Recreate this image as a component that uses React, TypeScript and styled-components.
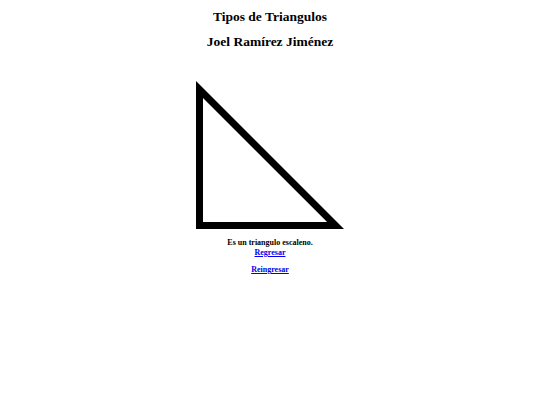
import styled, { createGlobalStyle } from 'styled-components';

const Global = createGlobalStyle`
  html, body {
    margin: 0;
    padding: 0;
    background: #ffffff;
  }
  body {
    font-family: "Liberation Serif", "Times New Roman", serif;
    color: #000000;
  }
`;

const Page = styled.main`
  display: flex;
  flex-direction: column;
  align-items: center;
  padding-top: 8px;
  text-align: center;
`;

const Title = styled.h1`
  margin: 0;
  font-size: 13.5px;
  line-height: 18px;
  font-weight: bold;
`;

const Author = styled.h2`
  margin: 7px 0 0;
  font-size: 13.5px;
  line-height: 18px;
  font-weight: bold;
`;

const Figure = styled.svg`
  display: block;
  margin-top: 30px;
`;

const Result = styled.p`
  margin: 9px 0 0;
  font-size: 8px;
  line-height: 10px;
  font-weight: bold;
`;

const NavLink = styled.a<{ $gap: number }>`
  display: block;
  margin-top: ${(p) => p.$gap}px;
  font-size: 8px;
  line-height: 10px;
  font-weight: bold;
  color: #0000ee;
  text-decoration: underline;
`;

const App = () => {
  return (
    <>
      <Global />
      <Page>
        <Title>Tipos de Triangulos</Title>
        <Author>Joel Ramírez Jiménez</Author>
        <Figure width="148" height="148" viewBox="0 0 148 148">
          <path
            fillRule="evenodd"
            fill="#000"
            d="M0 0 L0 148 L148 148 Z M7 16.9 L7 141 L131.1 141 Z"
          />
        </Figure>
        <Result>Es un triangulo escaleno.</Result>
        <NavLink href="#" $gap={0}>Regresar</NavLink>
        <NavLink href="#" $gap={7}>Reingresar</NavLink>
      </Page>
    </>
  );
};

export default App;
